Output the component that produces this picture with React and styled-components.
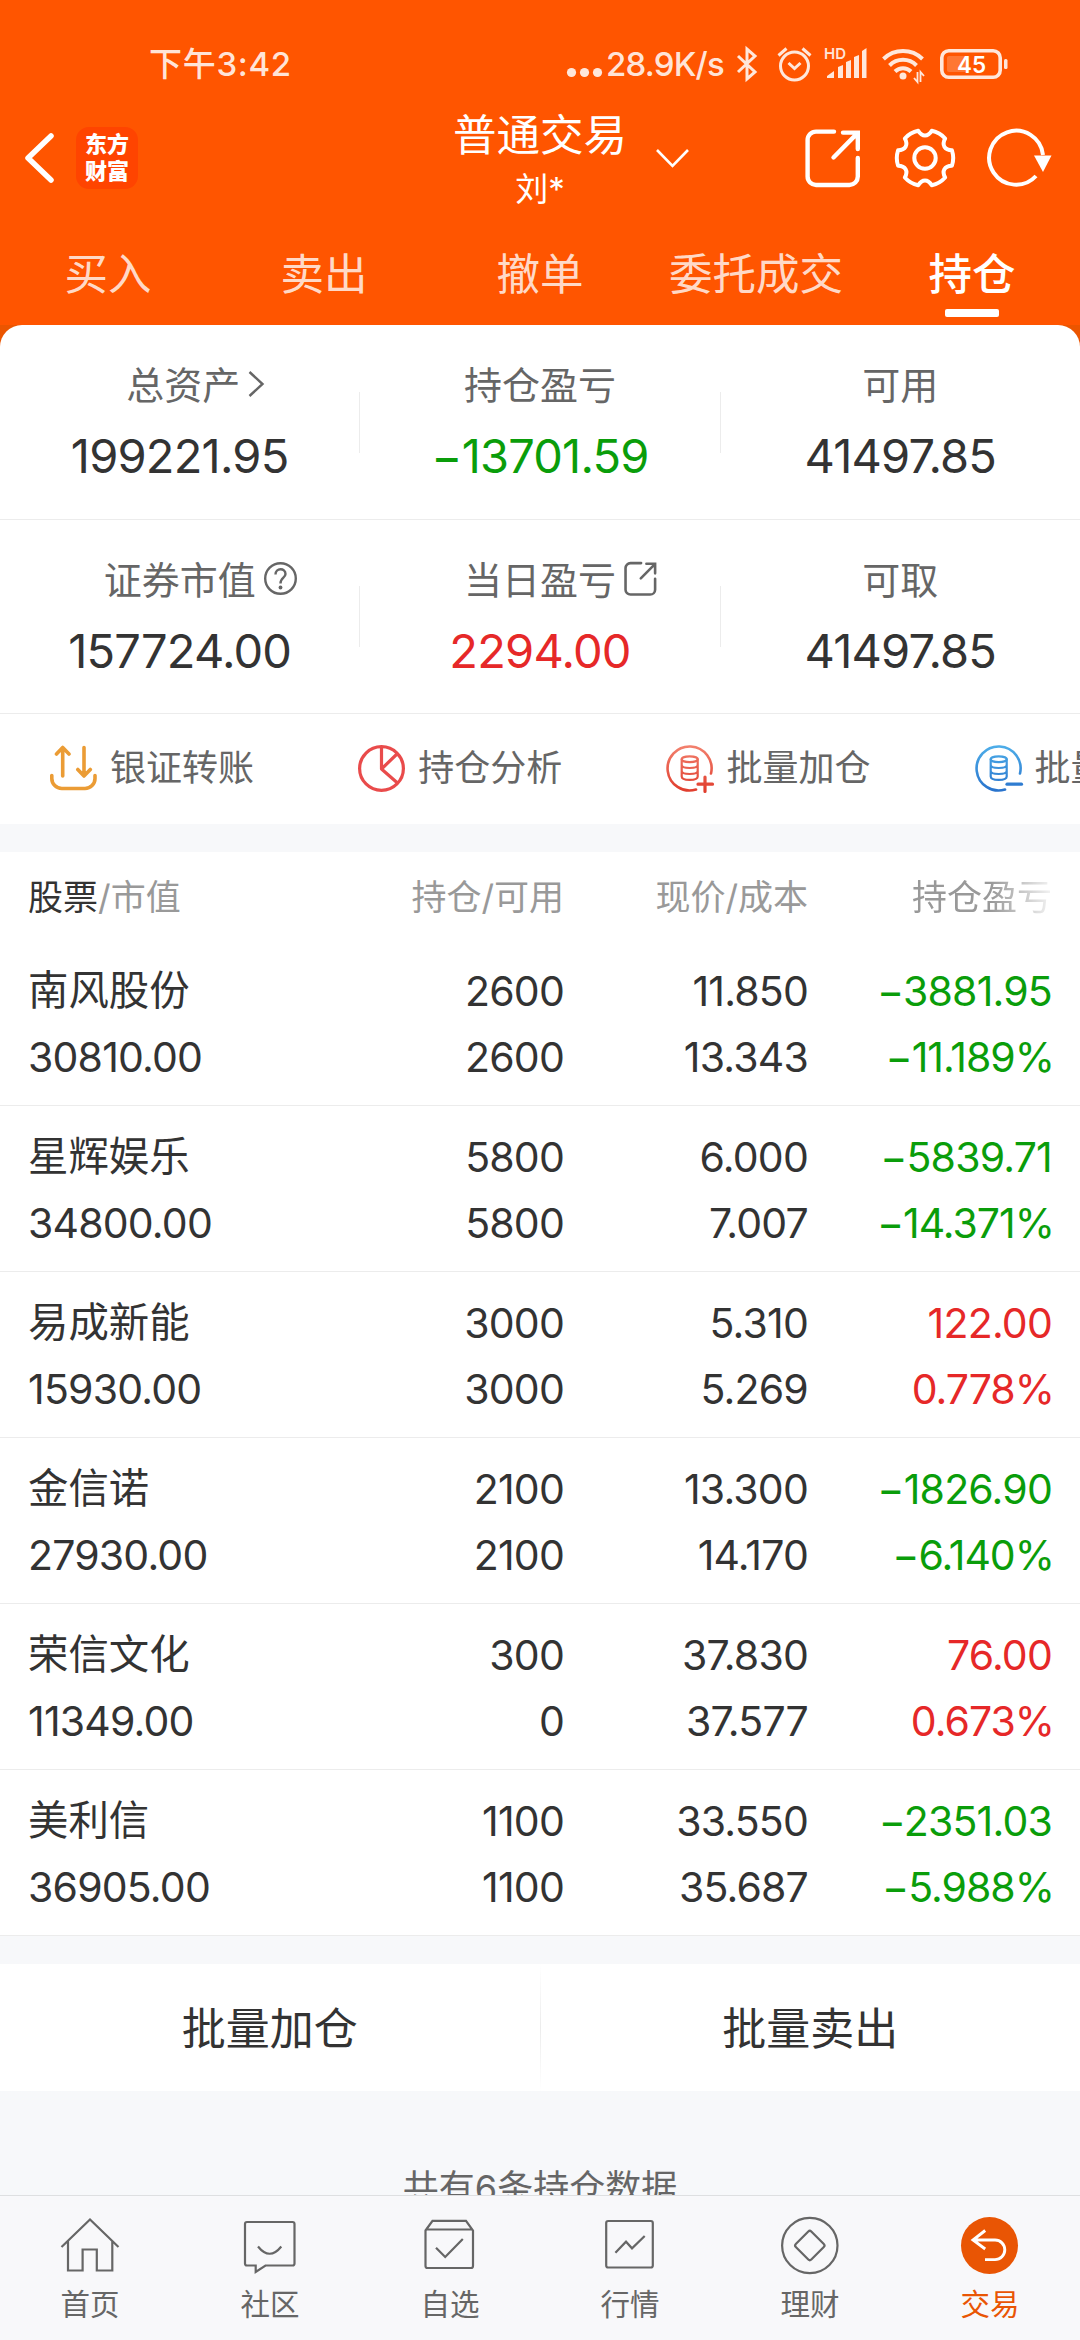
import React, { useState } from "react";
import styled, { createGlobalStyle } from "styled-components";

const GlobalStyle = createGlobalStyle`
  * {
    box-sizing: border-box;
  }

  body {
    margin: 0;
    font-family: Inter, "Noto Sans CJK SC", sans-serif;
    color: #333;
    background-color: #f7f8fa;
  }

  svg {
    display: block;
    flex-shrink: 0;
    overflow: visible;
  }
`;

const Screen = styled.div`
  width: 1080px;
  height: 2340px;
  display: flex;
  flex-direction: column;
  overflow: hidden;
`;

const Top = styled.div`
  height: 325px;
  flex-shrink: 0;
  background-color: #ff5500;
  color: white;
`;

const StatusBar = styled.div`
  height: 98px;
  padding: 29px 72px 0 149px;
  display: flex;
  justify-content: space-between;
  font-size: 33px;
  font-weight: 500;
  line-height: 70px;
  color: rgba(255, 255, 255, 0.86);
`;

const Time = styled.span`
  letter-spacing: 0.7px;
`;

const StatusIcons = styled.div`
  height: 70px;
  display: flex;
  align-items: center;
`;

const Speed = styled.span`
  margin: 0 13px 0 4px;
  width: 118px;
  letter-spacing: -0.8px;
  white-space: nowrap;
`;

const Gap = styled.span`
  width: ${(p) => p.size}px;
  flex-shrink: 0;
`;

const Header = styled.div`
  height: 120px;
  padding: 0 28px 0 24px;
  display: grid;
  grid-template-columns: 1fr auto 1fr;
  align-items: center;
`;

const HeaderLeft = styled.div`
  display: flex;
  align-items: center;
  gap: 21px;
`;

const Logo = styled.div`
  width: 62px;
  height: 62px;
  border-radius: 13px;
  padding-top: 4px;
  background-color: #ff4400;
  text-align: center;
  font-size: 22px;
  font-weight: 800;
  line-height: 27px;
`;

const Account = styled.div`
  display: flex;
  align-items: center;
  margin-left: 4px;
`;

const AccountText = styled.div`
  padding-top: 7px;
  text-align: center;
  line-height: 54px;
`;

const AccountType = styled.div`
  font-size: 43.5px;
`;

const AccountName = styled.div`
  font-size: 33px;
`;

const Chevron = styled.svg`
  margin: 0 -62px 0 29px;
`;

const HeaderActions = styled.div`
  display: flex;
  justify-content: flex-end;
  align-items: center;
`;

const Tabs = styled.div`
  display: flex;
`;

const Tab = styled.button`
  flex: 1;
  height: 107px;
  padding: 27px 0 0;
  border: none;
  background: none;
  cursor: pointer;
  display: flex;
  flex-direction: column;
  align-items: center;
  gap: 6px;
  font-family: inherit;
  font-size: 43.5px;
  font-weight: ${(p) => (p.$active ? 500 : 400)};
  line-height: 58px;
  color: ${(p) => (p.$active ? "white" : "rgba(255, 255, 255, 0.8)")};

  &::after {
    content: "";
    width: 54px;
    height: 8px;
    border-radius: 2px;
    background-color: ${(p) => (p.$active ? "white" : "transparent")};
  }
`;

const Content = styled.div`
  flex: 1;
  min-height: 0;
  overflow: hidden;
  background: linear-gradient(#eb5500 0 40px, #f7f8fa 40px);
`;

const Summary = styled.div`
  background-color: white;
  border-radius: 22px 22px 0 0;
`;

const SummaryRow = styled.div`
  display: flex;
  align-items: center;
  height: ${(p) => p.height}px;
  border-bottom: 1px solid #ececec;
`;

const SummaryItem = styled.div`
  flex: 1;
  text-align: center;
`;

const Divider = styled.div`
  width: 1px;
  height: 61px;
  background-color: #ececec;
`;

const SummaryLabel = styled.div`
  display: flex;
  justify-content: center;
  align-items: center;
  font-size: 38px;
  line-height: 50px;
  color: #666;

  svg {
    margin: -2px ${(p) => p.$overhang}px 0 8px;
  }
`;

const toneColor = { up: "#e62828", down: "#0a9d0a" };

const SummaryValue = styled.div`
  margin-top: 18px;
  font-size: 47px;
  line-height: 56px;
  letter-spacing: -0.8px;
  color: ${(p) => toneColor[p.$tone] || "#333"};
`;

const Tools = styled.div`
  display: flex;
  height: 110px;
  padding-left: 49px;
  background-color: white;
  overflow: hidden;
`;

const Tool = styled.div`
  width: 308.2px;
  flex-shrink: 0;
  display: flex;
  align-items: center;
  gap: 12px;
  font-size: 36px;
  line-height: 50px;
  white-space: nowrap;
  color: #666;
`;

const ToolLabel = styled.span`
  margin-bottom: 3px;
`;

const Spacer = styled.div`
  height: 28px;
  background-color: #f7f8fa;
`;

const Holdings = styled.div`
  background-color: white;
`;

const HoldingsRow = styled.div`
  display: grid;
  grid-template-columns: 1fr 240px 244px 244px;
  padding: 18px 28px 0;
  height: 166px;
  border-bottom: 1px solid #ececec;
  font-size: 41px;
  line-height: 66px;
  letter-spacing: -0.8px;
`;

const HoldingsHead = styled(HoldingsRow)`
  height: 88px;
  padding-top: 12px;
  border-bottom: none;
  font-size: 35px;
  letter-spacing: 0;
  color: #999;
`;

const Cell = styled.div`
  text-align: ${(p) => (p.$left ? "left" : "right")};
  color: ${(p) => toneColor[p.$tone] || "inherit"};
  white-space: nowrap;
`;

const StockName = styled.div`
  font-size: 40.4px;
  letter-spacing: 0;
`;

const Percent = styled.div`
  margin-right: -2px;
  letter-spacing: -1px;
`;

const Strong = styled.span`
  color: #333;
`;

const FadedCell = styled(Cell)`
  mask-image: linear-gradient(to right, black 75%, transparent 103%);
`;

const Actions = styled.div`
  display: flex;
  align-items: center;
  height: 127px;
  background-color: white;
`;

const ActionButton = styled.button`
  flex: 1;
  padding: 0 0 3px;
  border: none;
  background: none;
  cursor: pointer;
  font-family: inherit;
  font-size: 44px;
  color: #333;
`;

const FadedDivider = styled.div`
  width: 1px;
  height: 127px;
  background: linear-gradient(white, #ececec 50%, white);
`;

const Footnote = styled.div`
  padding-top: 70px;
  text-align: center;
  font-size: 36px;
  line-height: 54px;
  color: #666;
`;

const Nav = styled.div`
  flex-shrink: 0;
  display: flex;
  height: 145px;
  border-top: 1px solid #dedfe1;
  background-color: #f8f8fa;
`;

const NavItem = styled.div`
  flex: 1;
  padding-top: 20px;
  display: flex;
  flex-direction: column;
  align-items: center;
  gap: 8px;
  font-size: 29.5px;
  line-height: 40px;
  color: ${(p) => (p.$active ? "#e95504" : "#666")};
`;

const gearPath = () => {
  const at = (deg, r) => {
    const a = (deg * Math.PI) / 180;
    return `${(31 + r * Math.cos(a)).toFixed(2)} ${(31 + r * Math.sin(a)).toFixed(2)}`;
  };
  let d = `M${at(-16, 28)}`;
  for (let k = 0; k < 6; k++) {
    const deg = k * 60;
    d += `Q${at(deg, 29.5)} ${at(deg + 16, 28)}`;
    d += `C${at(deg + 22, 21)} ${at(deg + 38, 21)} ${at(deg + 44, 28)}`;
  }
  return d + "Z";
};

const ShareIcon = ({ size, color, stroke }) => (
  <svg
    width={size}
    height={(size * 60) / 56}
    viewBox="0 0 56 60"
    fill="none"
    stroke={color}
    strokeWidth={stroke}
    strokeLinecap="round"
  >
    <path d="M29 3.6H11A8.4 8.4 0 0 0 2.6 12V48.6A8.4 8.4 0 0 0 11 57H44.4A8.4 8.4 0 0 0 52.8 48.6V30" />
    <path d="M38 4.6H52.8V21M28.5 29.5L52 5.6" />
  </svg>
);

const StatusGlyphs = () => (
  <>
    <svg width="20" height="36" viewBox="0 0 20 36" fill="none" stroke="currentColor" strokeWidth="3">
      <path d="M1 10L18 26L10 33V3L18 10L1 26" />
    </svg>
    <Gap size={20} />
    <svg width="35" height="36" viewBox="0 0 35 36" fill="none" stroke="currentColor" strokeWidth="3">
      <circle cx="17.5" cy="20" r="14" />
      <path d="M11.5 17L17.5 22.5L23.5 17M1.5 9.5L9.5 2.5M33.5 9.5L25.5 2.5" />
    </svg>
    <Gap size={13} />
    <svg width="42" height="36" viewBox="0 0 42 36" fill="currentColor">
      <text x="-1" y="13" fontSize="15" fontWeight="600">HD</text>
      <path d="M2 32V30L9 25V32ZM13 21L18 19V32H13ZM21 16L26 14V32H21ZM29 11L34 9V32H29ZM37 5L41.500 2V32H37Z" />
    </svg>
    <Gap size={15} />
    <svg width="42" height="36" viewBox="0 0 42 36" fill="none" stroke="currentColor" strokeWidth="4">
      <path d="M1.500 13A28 28 0 0 1 40.500 13" />
      <path d="M7.500 19.500A19 19 0 0 1 34.500 19.500" />
      <path d="M13 25.500A11.500 11.500 0 0 1 29 25.500" />
      <circle cx="21" cy="30" r="3.500" fill="currentColor" stroke="none" />
      <path d="M35.500 26V36L32 32M38.500 36V26L42 30" strokeWidth="1.800" />
    </svg>
    <Gap size={16} />
    <svg width="68" height="30" viewBox="0 0 68 30" fill="none">
      <rect x="1.800" y="1.800" width="58.400" height="26.400" rx="7" stroke="currentColor" strokeWidth="3.600" />
      <rect x="7" y="7" width="20" height="16" rx="2" fill="white" fillOpacity="0.200" />
      <rect x="64" y="10" width="3.500" height="10" rx="1.500" fill="currentColor" />
      <text x="31.500" y="24" fontSize="22.500" fontWeight="600" textAnchor="middle" fill="white">45</text>
    </svg>
  </>
);

const TransferIcon = () => (
  <svg
    width="49"
    height="50"
    viewBox="0 0 49 50"
    fill="none"
    stroke="#eb9c35"
    strokeWidth="3.6"
    strokeLinecap="round"
    strokeLinejoin="round"
  >
    <path d="M2.800 31.500V34.500A10 10 0 0 0 12.800 44.500H36A10 10 0 0 0 46 34.500V31.500" />
    <path d="M13.700 32V4M7.500 10L13.700 3.500L20 10M35 3.500V31.500M28.800 25.500L35 32L41.300 25.500" />
  </svg>
);

const PieIcon = () => (
  <svg width="49" height="50" viewBox="0 0 49 50" fill="none" stroke="#e94b4b" strokeWidth="3.2" strokeLinejoin="round">
    <circle cx="24.500" cy="24.500" r="21.900" />
    <path d="M24.500 3V25L40.500 9.500M24.500 25L40.500 39" />
  </svg>
);

const StackIcon = ({ id, from, to, plus }) => (
  <svg
    width="49"
    height="50"
    viewBox="0 0 49 50"
    fill="none"
    stroke={`url(#${id})`}
    strokeWidth="2.6"
    strokeLinecap="round"
  >
    <defs>
      <linearGradient id={id} gradientUnits="userSpaceOnUse" x1="0" y1="0" x2="0" y2="48">
        <stop offset="0" stopColor={from} />
        <stop offset="1" stopColor={to} />
      </linearGradient>
    </defs>
    <path d="M46 29.500A22 22 0 1 0 31 45.500" />
    <ellipse cx="24.700" cy="15.200" rx="8" ry="2.900" strokeWidth="2.200" />
    <path
      d="M16.700 15.200V32.500C16.700 37 32.700 37 32.700 32.500V15.200M16.700 21C16.700 25 32.700 25 32.700 21M16.700 27C16.700 31 32.700 31 32.700 27"
      strokeWidth="2.200"
    />
    <path d={plus ? "M33 40.200H47.500M40 33V47.500" : "M33 40.200H47.500"} strokeWidth="3.200" />
  </svg>
);

const navIcons = {
  home: (
    <path d="M1.500 31L30 3.500L58.500 31M8 25V54.500H22.600V33.500H36.800V54.500H52.300V25" />
  ),
  community: (
    <path d="M25.500 49.500H52.500A2 2 0 0 0 54.500 47.500V8A2 2 0 0 0 52.500 6H7A2 2 0 0 0 5 8V47.500A2 2 0 0 0 7 49.500H15.700V56ZM18 30.500Q29.700 45 41.300 30.500" />
  ),
  watchlist: (
    <path d="M5.500 14.500L12.500 4.800H46L53 14.500V50A2 2 0 0 1 51 52H7.500A2 2 0 0 1 5.500 50ZM5.500 13.500H53M16 31.700L25.200 41L42.800 23" />
  ),
  market: (
    <path d="M8.200 5H50.800A2 2 0 0 1 52.800 7V49.500A2 2 0 0 1 50.800 51.500H8.200A2 2 0 0 1 6.200 49.500V7A2 2 0 0 1 8.200 5ZM15.400 36.700L26 25.700L32 32.300L44.700 20" />
  ),
  finance: (
    <>
      <circle cx="29.800" cy="29.500" r="27.700" />
      <path d="M28.300 15.500Q29.800 14 31.300 15.500L43.800 28Q45.300 29.500 43.800 31L31.300 43.500Q29.800 45 28.300 43.500L15.800 31Q14.300 29.500 15.800 28Z" />
    </>
  ),
  trade: (
    <>
      <circle cx="29.500" cy="29.500" r="28.500" fill="#e95504" stroke="none" />
      <path d="M25.200 14.500L13 24L25.200 33M13 24H35A9.800 9.800 0 0 1 35 43.600H25" stroke="white" strokeWidth="2.900" />
    </>
  ),
};

const tabs = ["买入", "卖出", "撤单", "委托成交", "持仓"];

const holdings = [
  { name: "南风股份", value: "30810.00", qty: "2600", free: "2600", price: "11.850", cost: "13.343", pl: "−3881.95", pct: "−11.189%" },
  { name: "星辉娱乐", value: "34800.00", qty: "5800", free: "5800", price: "6.000", cost: "7.007", pl: "−5839.71", pct: "−14.371%" },
  { name: "易成新能", value: "15930.00", qty: "3000", free: "3000", price: "5.310", cost: "5.269", pl: "122.00", pct: "0.778%" },
  { name: "金信诺", value: "27930.00", qty: "2100", free: "2100", price: "13.300", cost: "14.170", pl: "−1826.90", pct: "−6.140%" },
  { name: "荣信文化", value: "11349.00", qty: "300", free: "0", price: "37.830", cost: "37.577", pl: "76.00", pct: "0.673%" },
  { name: "美利信", value: "36905.00", qty: "1100", free: "1100", price: "33.550", cost: "35.687", pl: "−2351.03", pct: "−5.988%" },
];

const nav = [
  ["home", "首页"],
  ["community", "社区"],
  ["watchlist", "自选"],
  ["market", "行情"],
  ["finance", "理财"],
  ["trade", "交易"],
];

const App = () => {
  const [tab, setTab] = useState("持仓");

  return (
    <Screen>
      <GlobalStyle />
      <Top>
        <StatusBar>
          <Time>下午3:42</Time>
          <StatusIcons>
            <svg width="35" height="30" viewBox="0 0 35 30" fill="currentColor">
              <circle cx="4.500" cy="23.500" r="4.600" />
              <circle cx="17.500" cy="23.500" r="4.600" />
              <circle cx="30.500" cy="23.500" r="4.600" />
            </svg>
            <Speed>28.9K/s</Speed>
            <StatusGlyphs />
          </StatusIcons>
        </StatusBar>
        <Header>
          <HeaderLeft>
            <svg
              width="31"
              height="52"
              viewBox="0 0 31 52"
              fill="none"
              stroke="white"
              strokeWidth="5.5"
              strokeLinecap="round"
              strokeLinejoin="round"
            >
              <path d="M27 4L4 26L27 48" />
            </svg>
            <Logo>
              东方
              <br />
              财富
            </Logo>
          </HeaderLeft>
          <Account>
            <AccountText>
              <AccountType>普通交易</AccountType>
              <AccountName>刘*</AccountName>
            </AccountText>
            <Chevron width="33" height="19" viewBox="0 0 33 19" fill="none" stroke="white" strokeWidth="2.6">
              <path d="M1 1L16.500 17L32 1" />
            </Chevron>
          </Account>
          <HeaderActions>
            <ShareIcon size={56} color="white" stroke={4.4} />
            <Gap size={33} />
            <svg width="62" height="62" viewBox="0 0 62 62" fill="none" stroke="white" strokeWidth="4" strokeLinejoin="round">
              <path d={gearPath()} />
              <circle cx="31" cy="31" r="10.700" />
            </svg>
            <Gap size={31} />
            <svg width="65" height="60" viewBox="0 0 65 60" fill="none" stroke="white" strokeWidth="4">
              <path d="M56 27A27 27 0 1 0 49 48" />
              <path d="M47 27.500H64.500L56 44Z" fill="white" stroke="none" />
            </svg>
          </HeaderActions>
        </Header>
        <Tabs>
          {tabs.map((t) => (
            <Tab key={t} $active={t === tab} onClick={() => setTab(t)}>
              {t}
            </Tab>
          ))}
        </Tabs>
      </Top>
      <Content>
        <Summary>
          <SummaryRow height={195}>
            <SummaryItem>
              <SummaryLabel $overhang={-32}>
                总资产
                <svg width="17" height="26" viewBox="0 0 17 26" fill="none" stroke="#666" strokeWidth="2.4">
                  <path d="M1.500 1L14.500 13L1.500 25" />
                </svg>
              </SummaryLabel>
              <SummaryValue>199221.95</SummaryValue>
            </SummaryItem>
            <Divider />
            <SummaryItem>
              <SummaryLabel>持仓盈亏</SummaryLabel>
              <SummaryValue $tone="down">−13701.59</SummaryValue>
            </SummaryItem>
            <Divider />
            <SummaryItem>
              <SummaryLabel>可用</SummaryLabel>
              <SummaryValue>41497.85</SummaryValue>
            </SummaryItem>
          </SummaryRow>
          <SummaryRow height={194}>
            <SummaryItem>
              <SummaryLabel $overhang={-41}>
                证券市值
                <svg width="33" height="33" viewBox="0 0 33 33" fill="none" stroke="#666" strokeWidth="2.4">
                  <circle cx="16.500" cy="16.500" r="15.300" />
                  <path d="M11.500 12.500C11.500 5.500 21.500 5.500 21.500 12C21.500 16 16.500 15.500 16.500 21.500" />
                  <circle cx="16.500" cy="25.500" r="1.900" fill="#666" stroke="none" />
                </svg>
              </SummaryLabel>
              <SummaryValue>157724.00</SummaryValue>
            </SummaryItem>
            <Divider />
            <SummaryItem>
              <SummaryLabel $overhang={-41}>
                当日盈亏
                <ShareIcon size={33} color="#666" stroke={4.4} />
              </SummaryLabel>
              <SummaryValue $tone="up">2294.00</SummaryValue>
            </SummaryItem>
            <Divider />
            <SummaryItem>
              <SummaryLabel>可取</SummaryLabel>
              <SummaryValue>41497.85</SummaryValue>
            </SummaryItem>
          </SummaryRow>
        </Summary>
        <Tools>
          <Tool>
            <TransferIcon />
            <ToolLabel>银证转账</ToolLabel>
          </Tool>
          <Tool>
            <PieIcon />
            <ToolLabel>持仓分析</ToolLabel>
          </Tool>
          <Tool>
            <StackIcon id="add" from="#f38370" to="#e03c2c" plus />
            <ToolLabel>批量加仓</ToolLabel>
          </Tool>
          <Tool>
            <StackIcon id="sell" from="#4fb0ea" to="#2872cc" />
            <ToolLabel>批量卖出</ToolLabel>
          </Tool>
        </Tools>
        <Spacer />
        <Holdings>
          <HoldingsHead>
            <Cell $left>
              <Strong>股票</Strong>/市值
            </Cell>
            <Cell>持仓/可用</Cell>
            <Cell>现价/成本</Cell>
            <FadedCell>持仓盈亏</FadedCell>
          </HoldingsHead>
          {holdings.map((h) => {
            const tone = h.pl.startsWith("−") ? "down" : "up";
            return (
              <HoldingsRow key={h.name}>
                <Cell $left>
                  <StockName>{h.name}</StockName>
                  {h.value}
                </Cell>
                <Cell>
                  <div>{h.qty}</div>
                  {h.free}
                </Cell>
                <Cell>
                  <div>{h.price}</div>
                  {h.cost}
                </Cell>
                <Cell $tone={tone}>
                  <div>{h.pl}</div>
                  <Percent>{h.pct}</Percent>
                </Cell>
              </HoldingsRow>
            );
          })}
        </Holdings>
        <Spacer />
        <Actions>
          <ActionButton>批量加仓</ActionButton>
          <FadedDivider />
          <ActionButton>批量卖出</ActionButton>
        </Actions>
        <Footnote>共有6条持仓数据</Footnote>
      </Content>
      <Nav>
        {nav.map(([key, label]) => (
          <NavItem key={key} $active={key === "trade"}>
            <svg width="60" height="60" viewBox="0 0 60 60" fill="none" stroke="#666" strokeWidth="2.2">
              {navIcons[key]}
            </svg>
            {label}
          </NavItem>
        ))}
      </Nav>
    </Screen>
  );
};

export default App;
